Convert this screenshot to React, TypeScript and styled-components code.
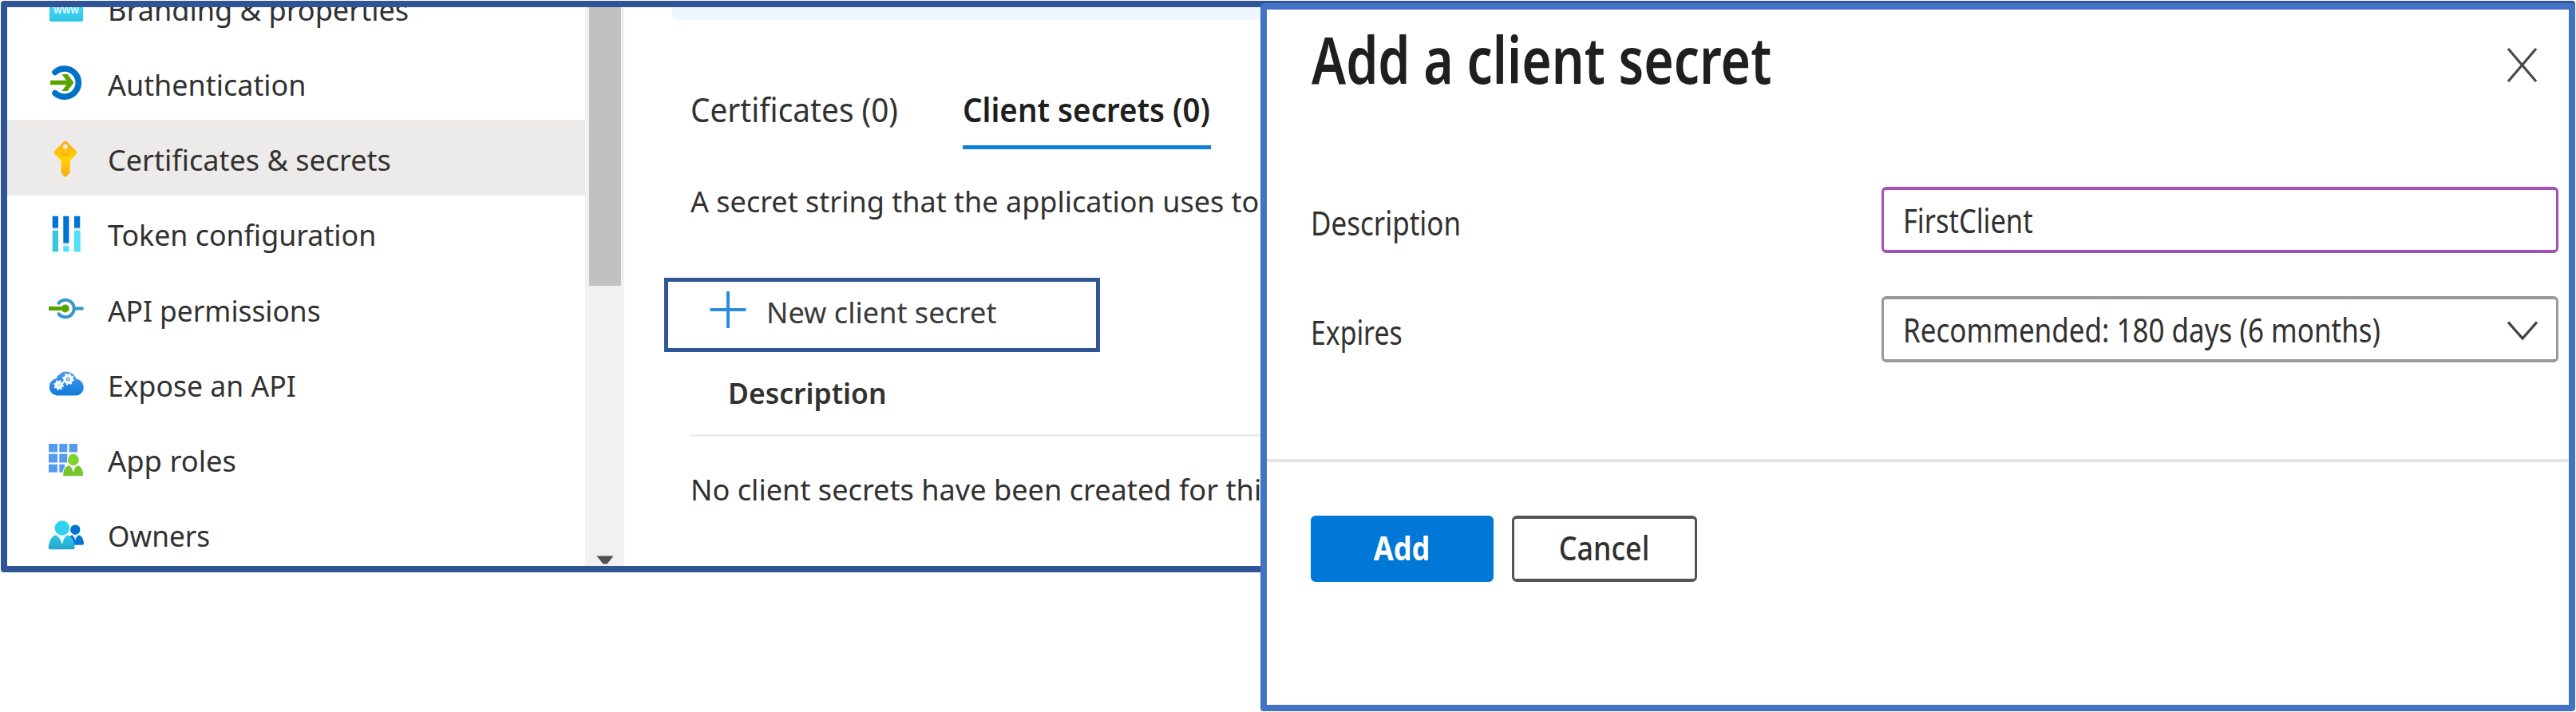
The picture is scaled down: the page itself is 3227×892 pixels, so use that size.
import React from "react";
import styled, { createGlobalStyle } from "styled-components";

const GlobalStyle = createGlobalStyle`
  *, *::before, *::after { box-sizing: border-box; }
  body {
    margin: 0;
    background: #fff;
    color: #323130;
    font-family: "Noto Sans", "Segoe UI", sans-serif;
  }
`;

const Page = styled.div`
  position: relative;
  width: 3227px;
  height: 892px;
  padding: 1px;
  overflow: hidden;
  background: #fff;
`;

/* Text whose letters are drawn narrower than the font's own width */
const Label = styled.span<{ $squeeze: number; $center?: boolean }>`
  display: inline-block;
  white-space: nowrap;
  transform: scaleX(${(p) => p.$squeeze});
  transform-origin: ${(p) => (p.$center ? "center" : "left")} center;
`;

/* ---------- App registration window ---------- */

const PortalWindow = styled.section`
  display: flex;
  width: 3225px;
  height: 716px;
  border: 8px solid #2f5597;
  border-radius: 4px;
  background: #fff;
  overflow: hidden;
`;

const Sidebar = styled.nav`
  display: flex;
  flex-direction: column;
  flex: none;
  width: 724px;
  height: 700px;
  overflow: hidden;
`;

const MenuList = styled.ul`
  flex: none;
  margin: -47.1px 0 0;
  padding: 0;
  list-style: none;
`;

const MenuItem = styled.li<{ $selected?: boolean }>`
  display: flex;
  align-items: center;
  height: 94.25px;
  padding-left: 50px;
  gap: 27.5px;
  background: ${(p) => (p.$selected ? "#ecebe9" : "transparent")};
  font-size: 36.5px;
  line-height: 50px;

  svg {
    flex: none;
    width: 48px;
    height: 94px;
  }

  span {
    margin-top: 5px;
  }
`;

const ScrollTrack = styled.div`
  display: flex;
  flex-direction: column;
  align-items: center;
  justify-content: space-between;
  flex: none;
  width: 49px;
  height: 700px;
  padding-bottom: 2px;
  background: #f1f1f1;
`;

const ScrollThumb = styled.div`
  width: 40px;
  height: 349px;
  background: #c1c1c1;
`;

const ScrollArrow = styled.svg`
  width: 22px;
  height: 11px;
`;

const Content = styled.main`
  flex: 1;
  min-width: 0;
  padding-left: 50px;
`;

const InfoBanner = styled.div`
  height: 16px;
  margin-left: 10px;
  border-bottom-left-radius: 5px;
  background: #eff6ff;
`;

const Tabs = styled.div`
  display: flex;
  gap: 82px;
  margin: 82px 0 0 33px;
  font-size: 41.5px;
  line-height: 60px;
`;

const Tab = styled.div<{ $active?: boolean }>`
  width: ${(p) => (p.$active ? "311px" : "259px")};
  height: 80px;
  border-bottom: 5px solid ${(p) => (p.$active ? "#1081d9" : "transparent")};
  color: ${(p) => (p.$active ? "#201f1e" : "#323130")};
  font-weight: ${(p) => (p.$active ? 600 : 400)};
`;

const Paragraph = styled.p<{ $top: number }>`
  margin: ${(p) => p.$top}px 0 0 33px;
  font-size: 36.5px;
  line-height: 50px;
`;

const NewSecretButton = styled.button`
  display: flex;
  align-items: center;
  width: 546px;
  height: 93px;
  margin: 71px 0 0;
  padding: 0 0 6px 52px;
  gap: 25px;
  border: 5px solid #2f5597;
  background: #fff;
  color: #3b3a39;
  font: 400 36.5px/50px "Noto Sans", "Segoe UI", sans-serif;

  svg {
    width: 46px;
    height: 46px;
    margin-top: -6px;
  }
`;

const TableHeader = styled.div`
  height: 106px;
  margin-left: 32px;
  padding: 26px 0 0 48px;
  border-bottom: 3px solid #eeecea;
  font-size: 36.5px;
  font-weight: 600;
  line-height: 50px;
`;

/* ---------- "Add a client secret" window ---------- */

const SecretWindow = styled.section`
  position: absolute;
  top: 4px;
  left: 1579px;
  display: flex;
  flex-direction: column;
  width: 1647px;
  height: 887px;
  border: 8px solid #4472c4;
  border-radius: 4px;
  background: #fff;
`;

const WindowHeader = styled.header`
  display: flex;
  justify-content: space-between;
  height: 222px;
  padding: 12px 40px 0 56px;
`;

const Title = styled.h1`
  margin: 0;
  color: #201f1e;
  font-size: 81px;
  font-weight: 600;
  line-height: 100px;
`;

const CloseIcon = styled.svg`
  width: 37px;
  height: 43px;
  margin-top: 36px;
`;

const Form = styled.div`
  display: flex;
  flex-direction: column;
  gap: 54px;
  height: 341px;
  padding: 0 13px 0 55px;
`;

const Field = styled.div`
  display: flex;
  justify-content: space-between;
  height: 83px;
  font-size: 42px;
  line-height: 83px;

  > span {
    margin-top: 3px;
  }
`;

const Control = styled.div<{ $focused?: boolean }>`
  display: flex;
  align-items: center;
  justify-content: space-between;
  width: 848px;
  height: 83px;
  padding: 0 22px 0 24px;
  border: solid ${(p) => (p.$focused ? "#a352ba" : "#9b9997")};
  border-width: 4px 3px;
  border-radius: 6px;
  line-height: 75px;

  svg {
    flex: none;
    width: 40px;
    height: 28px;
    margin-top: 4px;
  }
`;

const Footer = styled.footer`
  display: flex;
  gap: 23px;
  padding: 67px 0 0 55px;
  border-top: 4px solid #e4e4e4;
`;

const ActionButton = styled.button<{ $primary?: boolean }>`
  width: ${(p) => (p.$primary ? 229 : 232)}px;
  height: 83px;
  padding: 0 0 3px;
  border: solid ${(p) => (p.$primary ? "#0078d7" : "#555453")};
  border-width: 4px 3px;
  border-radius: 6px;
  background: ${(p) => (p.$primary ? "#0078d7" : "#fff")};
  color: ${(p) => (p.$primary ? "#fff" : "#323130")};
  font: ${(p) => (p.$primary ? 700 : 500)} 42px/72px "Noto Sans", "Segoe UI", sans-serif;
`;

/* ---------- Menu icons, each on a 48 x 94 field ---------- */

const BrandingIcon = () => (
  <svg viewBox="0 0 48 94">
    <defs>
      <linearGradient id="brand" x1="0" y1="0" x2="0" y2="1">
        <stop offset="0" stopColor="#50e6ff" />
        <stop offset="1" stopColor="#2cc3e6" />
      </linearGradient>
    </defs>
    <rect x="3" y="32" width="42" height="33" rx="1.5" fill="url(#brand)" />
    <text x="24" y="55" textAnchor="middle" fontSize="15" fontWeight="600" fill="#e6f9fd" textLength="32" lengthAdjust="spacingAndGlyphs">
      www
    </text>
  </svg>
);

const AuthenticationIcon = () => (
  <svg viewBox="0 0 48 94" fill="none">
    <path d="M10 34.5A17.6 17.6 0 1 1 10 60.7" stroke="#0072c6" strokeWidth="7.6" strokeLinecap="round" />
    <path d="M4 47.5H29" stroke="#57a300" strokeWidth="5.6" />
    <path d="M18.5 37H25.5L33.5 47.5L25.5 58H18.5L26 47.5Z" fill="#57a300" />
  </svg>
);

const KeyIcon = () => (
  <svg viewBox="0 0 48 94">
    <defs>
      <linearGradient id="keyFill" x1="0" y1="0" x2="0" y2="1">
        <stop offset="0" stopColor="#ffa815" />
        <stop offset="0.5" stopColor="#ffd400" />
        <stop offset="1" stopColor="#fba80f" />
      </linearGradient>
    </defs>
    <path
      fillRule="evenodd"
      fill="url(#keyFill)"
      d="M21 26.4Q22.800 24.800 24.600 26.400L36.400 38.300Q38.300 40.300 36.400 42.300L30.200 48.600Q28.600 50.200 28.600 52.500V65.200L24.500 69.800Q22.900 71.200 21.300 69.800L17.600 65.200V52.500Q17.600 50.200 16 48.600L9.400 42.300Q7.500 40.300 9.400 38.300ZM22.900 29.500a3 3.200 0 1 0 .01 0Z"
    />
    <path d="M16.500 40.500H30L27 45H18.500Z" fill="#ffb311" />
  </svg>
);

const TokenIcon = () => (
  <svg viewBox="0 0 48 94">
    <path d="M6.700 40H14V45H6.700ZM20.300 59H27.400V64H20.300ZM34 40H41.300V45H34Z" fill="#dfe9ee" />
    <path d="M6.700 25.800H14V40.400H6.700ZM20.300 25.800H27.400V59.400H20.300ZM34 25.800H41.300V40.400H34Z" fill="#0072d4" />
    <path d="M6.700 44H14V70.400H6.700Z" fill="#36c6e3" />
    <path d="M20.300 63.400H27.400V70.400H20.300ZM33.700 44H41.700V70.400H33.700Z" fill="#50e0fb" />
  </svg>
);

const PermissionsIcon = () => (
  <svg viewBox="0 0 48 94" fill="none">
    <path d="M14.500 40.800A10.800 10.800 0 1 1 14.500 54.200" stroke="#3999c6" strokeWidth="4" strokeLinecap="round" />
    <path d="M34 47.500H45.600" stroke="#3999c6" strokeWidth="4.200" />
    <path d="M2 47.500H23" stroke="#57a300" strokeWidth="5" />
    <circle cx="22.700" cy="47.500" r="5" fill="#57a300" />
  </svg>
);

const CloudIcon = () => (
  <svg viewBox="0 0 48 94">
    <defs>
      <linearGradient id="cloudFill" x1="0" y1="0" x2="0" y2="1">
        <stop offset="0" stopColor="#4d9bec" />
        <stop offset="1" stopColor="#0d7bdb" />
      </linearGradient>
    </defs>
    <path d="M12 62.500A10.500 10.700 0 0 1 11.500 41.300A13.200 13.200 0 0 1 36.500 41.800A10.400 10.400 0 0 1 36.500 62.500Z" fill="url(#cloudFill)" />
    <circle cx="26.400" cy="42" r="4.200" fill="none" stroke="#fff" strokeWidth="3.400" />
    <circle cx="26.400" cy="42" r="6.400" fill="none" stroke="#fff" strokeWidth="2" strokeDasharray="2.500 2.526" />
    <circle cx="26.400" cy="42" r="1.500" fill="#cfe2f7" />
    <circle cx="14.600" cy="49.500" r="3.600" fill="#d4e6f8" stroke="#fff" strokeWidth="2.600" />
    <circle cx="14.600" cy="49.500" r="5.500" fill="none" stroke="#fff" strokeWidth="1.800" strokeDasharray="2.160 2.160" />
  </svg>
);

const RolesIcon = () => (
  <svg viewBox="0 0 48 94">
    <path
      d="M2 28H13V38.500H2ZM15.300 28H25.300V38.500H15.300ZM27.600 28H38V38.500H27.600ZM2 40.700H13V51.500H2ZM15.300 40.700H25.300V51.500H15.300ZM2 53.700H13V63.800H2ZM15.300 53.700H22V63.800H15.300Z"
      fill="#559aee"
    />
    <path d="M19.500 69V63Q21 55 28 54A8 8 0 1 1 37.500 54Q45 56 46 64V69Z" fill="#fff" />
    <ellipse cx="32.800" cy="48" rx="7" ry="7.200" fill="#82d22f" />
    <path d="M20.300 68.300V65Q21.300 56 28 55.300L32.800 60.500L37.600 55.300Q44 56 45 65V68.300Z" fill="#78c42c" />
    <path d="M30 56.500H35.600L32.800 64Z" fill="#f0f7e8" />
  </svg>
);

const OwnersIcon = () => (
  <svg viewBox="0 0 48 94">
    <defs>
      <linearGradient id="ownerFill" x1="0" y1="0" x2="0" y2="1">
        <stop offset="0" stopColor="#32c8ea" />
        <stop offset="1" stopColor="#22a5cb" />
      </linearGradient>
    </defs>
    <circle cx="35.300" cy="41.700" r="6.200" fill="#0072d0" />
    <path d="M26 60.800V52Q29 48.500 31.500 48.300L35.300 53L39.300 48.300Q45 49.500 46 58Q46.300 60.800 44 60.800Z" fill="#0078d4" />
    <path d="M33 48.500H37.800L35.300 55Z" fill="#dbeaf7" />
    <path d="M4 66.200Q1.300 66.200 1.700 63Q3.500 49.500 11.500 48.300L18.500 55L25.500 48.300Q33 50 34.600 63Q34.900 66.200 32 66.200Z" fill="url(#ownerFill)" />
    <path d="M14.300 49H23L18.700 60Z" fill="#eef7fa" />
    <circle cx="18.900" cy="39.500" r="9.300" fill="#30d0f2" />
  </svg>
);

const menu = [
  { text: "Branding & properties", squeeze: 0.989, Icon: BrandingIcon },
  { text: "Authentication", squeeze: 0.984, Icon: AuthenticationIcon },
  { text: "Certificates & secrets", squeeze: 0.987, Icon: KeyIcon, selected: true },
  { text: "Token configuration", squeeze: 0.98, Icon: TokenIcon },
  { text: "API permissions", squeeze: 0.968, Icon: PermissionsIcon },
  { text: "Expose an API", squeeze: 0.974, Icon: CloudIcon },
  { text: "App roles", squeeze: 0.996, Icon: RolesIcon },
  { text: "Owners", squeeze: 0.965, Icon: OwnersIcon },
];

export default function App() {
  return (
    <>
      <GlobalStyle />
      <Page>
        <PortalWindow>
          <Sidebar>
            <MenuList>
              {menu.map(({ text, squeeze, Icon, selected }) => (
                <MenuItem key={text} $selected={selected}>
                  <Icon />
                  <Label $squeeze={squeeze}>{text}</Label>
                </MenuItem>
              ))}
            </MenuList>
          </Sidebar>
          <ScrollTrack>
            <ScrollThumb />
            <ScrollArrow viewBox="0 0 22 11">
              <path d="M0.500 0.500H21.500L13.500 10.500H8.500Z" fill="#505050" />
            </ScrollArrow>
          </ScrollTrack>
          <Content>
            <InfoBanner />
            <Tabs>
              <Tab>
                <Label $squeeze={0.934}>Certificates (0)</Label>
              </Tab>
              <Tab $active>
                <Label $squeeze={0.928}>Client secrets (0)</Label>
              </Tab>
            </Tabs>
            <Paragraph $top={39.5}>
              <Label $squeeze={0.9865}>A secret string that the application uses to</Label>
            </Paragraph>
            <NewSecretButton>
              <svg viewBox="0 0 46 46">
                <path d="M23 0V46M0.500 23H45.500" stroke="#2a8fdf" strokeWidth="4" />
              </svg>
              <Label $squeeze={0.989}>New client secret</Label>
            </NewSecretButton>
            <TableHeader>
              <Label $squeeze={0.972}>Description</Label>
            </TableHeader>
            <Paragraph $top={41}>
              <Label $squeeze={0.99}>No client secrets have been created for thi</Label>
            </Paragraph>
          </Content>
        </PortalWindow>

        <SecretWindow>
          <WindowHeader>
            <Title>
              <Label $squeeze={0.793}>Add a client secret</Label>
            </Title>
            <CloseIcon viewBox="0 0 37 43">
              <path d="M1 1L36 42M36 1L1 42" stroke="#4a4a4a" strokeWidth="3.200" />
            </CloseIcon>
          </WindowHeader>
          <Form>
            <Field>
              <Label $squeeze={0.832}>Description</Label>
              <Control $focused>
                <Label $squeeze={0.82}>FirstClient</Label>
              </Control>
            </Field>
            <Field>
              <Label $squeeze={0.804}>Expires</Label>
              <Control>
                <Label $squeeze={0.833}>Recommended: 180 days (6 months)</Label>
                <svg viewBox="0 0 40 28">
                  <path d="M2 2.500L20 23L38 2.500" fill="none" stroke="#444" strokeWidth="3.400" />
                </svg>
              </Control>
            </Field>
          </Form>
          <Footer>
            <ActionButton $primary>
              <Label $squeeze={0.86} $center>
                Add
              </Label>
            </ActionButton>
            <ActionButton>
              <Label $squeeze={0.853} $center>
                Cancel
              </Label>
            </ActionButton>
          </Footer>
        </SecretWindow>
      </Page>
    </>
  );
}
